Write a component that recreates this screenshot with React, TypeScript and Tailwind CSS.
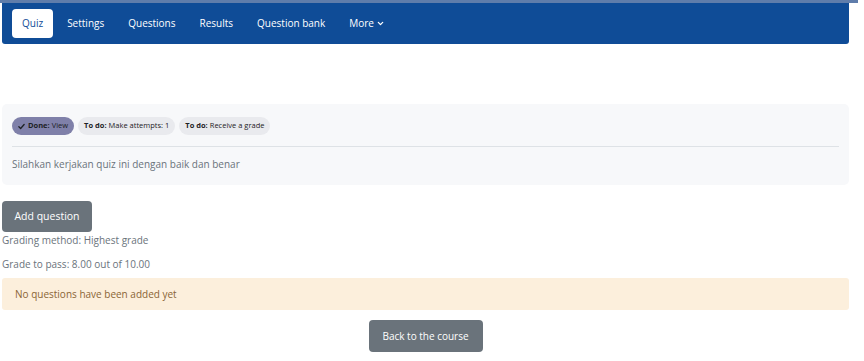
import React from 'react';

const tabs = ['Quiz', 'Settings', 'Questions', 'Results', 'Question bank'];

const CheckIcon = () => (
  <svg width="7" height="7" viewBox="0 0 16 16" className="mr-[3px]">
    <path d="M2 8.5l4 4 8-9" fill="none" stroke="#1d2125" strokeWidth="3" strokeLinecap="round" strokeLinejoin="round" />
  </svg>
);

const Badge = ({ label, value, done }: { label: string; value: string; done?: boolean }) => (
  <span
    className={`flex h-[18px] items-center rounded-full px-[6px] text-[7.5px] text-[#1d2125] ${
      done ? 'bg-[#7f80a9]' : 'bg-[#e9eaee]'
    }`}
  >
    {done && <CheckIcon />}
    <span className="font-bold">{label}</span>
    <span className="ml-[2px]">{value}</span>
  </span>
);

export default function App() {
  return (
    <div className="h-[361px] w-[864px] overflow-hidden bg-white font-['Open_Sans',sans-serif]">
      <div className="h-[3px] w-[858px] bg-[#5f7dab]" />

      <div className="w-[849px] pl-[2px]">
        {/* NAV */}
        <nav className="flex h-[41px] items-center gap-[4px] rounded-b-[3px] bg-[#0f4c97] pl-[10px]">
          {tabs.map((tab, i) => (
            <div
              key={tab}
              className={`flex h-[29px] items-center rounded-[4px] px-[10px] text-[10px] ${
                i === 0 ? 'bg-white text-[#0f4c97]' : 'text-white'
              }`}
            >
              {tab}
            </div>
          ))}
          <div className="flex h-[29px] items-center px-[10px] text-[10px] text-white">
            More
            <svg width="7" height="7" viewBox="0 0 16 16" className="ml-[3px]">
              <path d="M3 5.5l5 5 5-5" fill="none" stroke="white" strokeWidth="3" strokeLinecap="round" strokeLinejoin="round" />
            </svg>
          </div>
        </nav>

        {/* ACTIVITY INFO */}
        <div className="mt-[60px] h-[81px] rounded-[5px] bg-[#f7f8fa] px-[10px] pt-[13px]">
          <div className="flex gap-[4px]">
            <Badge label="Done:" value="View" done />
            <Badge label="To do:" value="Make attempts: 1" />
            <Badge label="To do:" value="Receive a grade" />
          </div>
          <div className="mt-[11px] border-t border-[#dee2e6]" />
          <p className="mt-[9px] text-[10px] leading-[16px] text-[#6a737b]">
            Silahkan kerjakan quiz ini dengan baik dan benar
          </p>
        </div>

        <button className="mt-[16px] flex h-[31px] w-[90px] items-center justify-center rounded-[4px] bg-[#6a737b] text-[10.5px] text-white">
          Add question
        </button>

        <p className="text-[10px] leading-[16px] text-[#6a737b]">Grading method: Highest grade</p>
        <p className="mt-[8px] text-[10px] leading-[16px] text-[#6a737b]">Grade to pass: 8.00 out of 10.00</p>

        <div className="mt-[6px] flex h-[32px] items-center rounded-[3px] bg-[#fcefdc] pl-[13px] text-[10px] text-[#8a6536]">
          No questions have been added yet
        </div>

        <div className="mt-[10px] flex justify-center">
          <button className="flex h-[32px] w-[114px] items-center justify-center rounded-[4px] bg-[#6a737b] text-[10px] text-white">
            Back to the course
          </button>
        </div>
      </div>
    </div>
  );
}
